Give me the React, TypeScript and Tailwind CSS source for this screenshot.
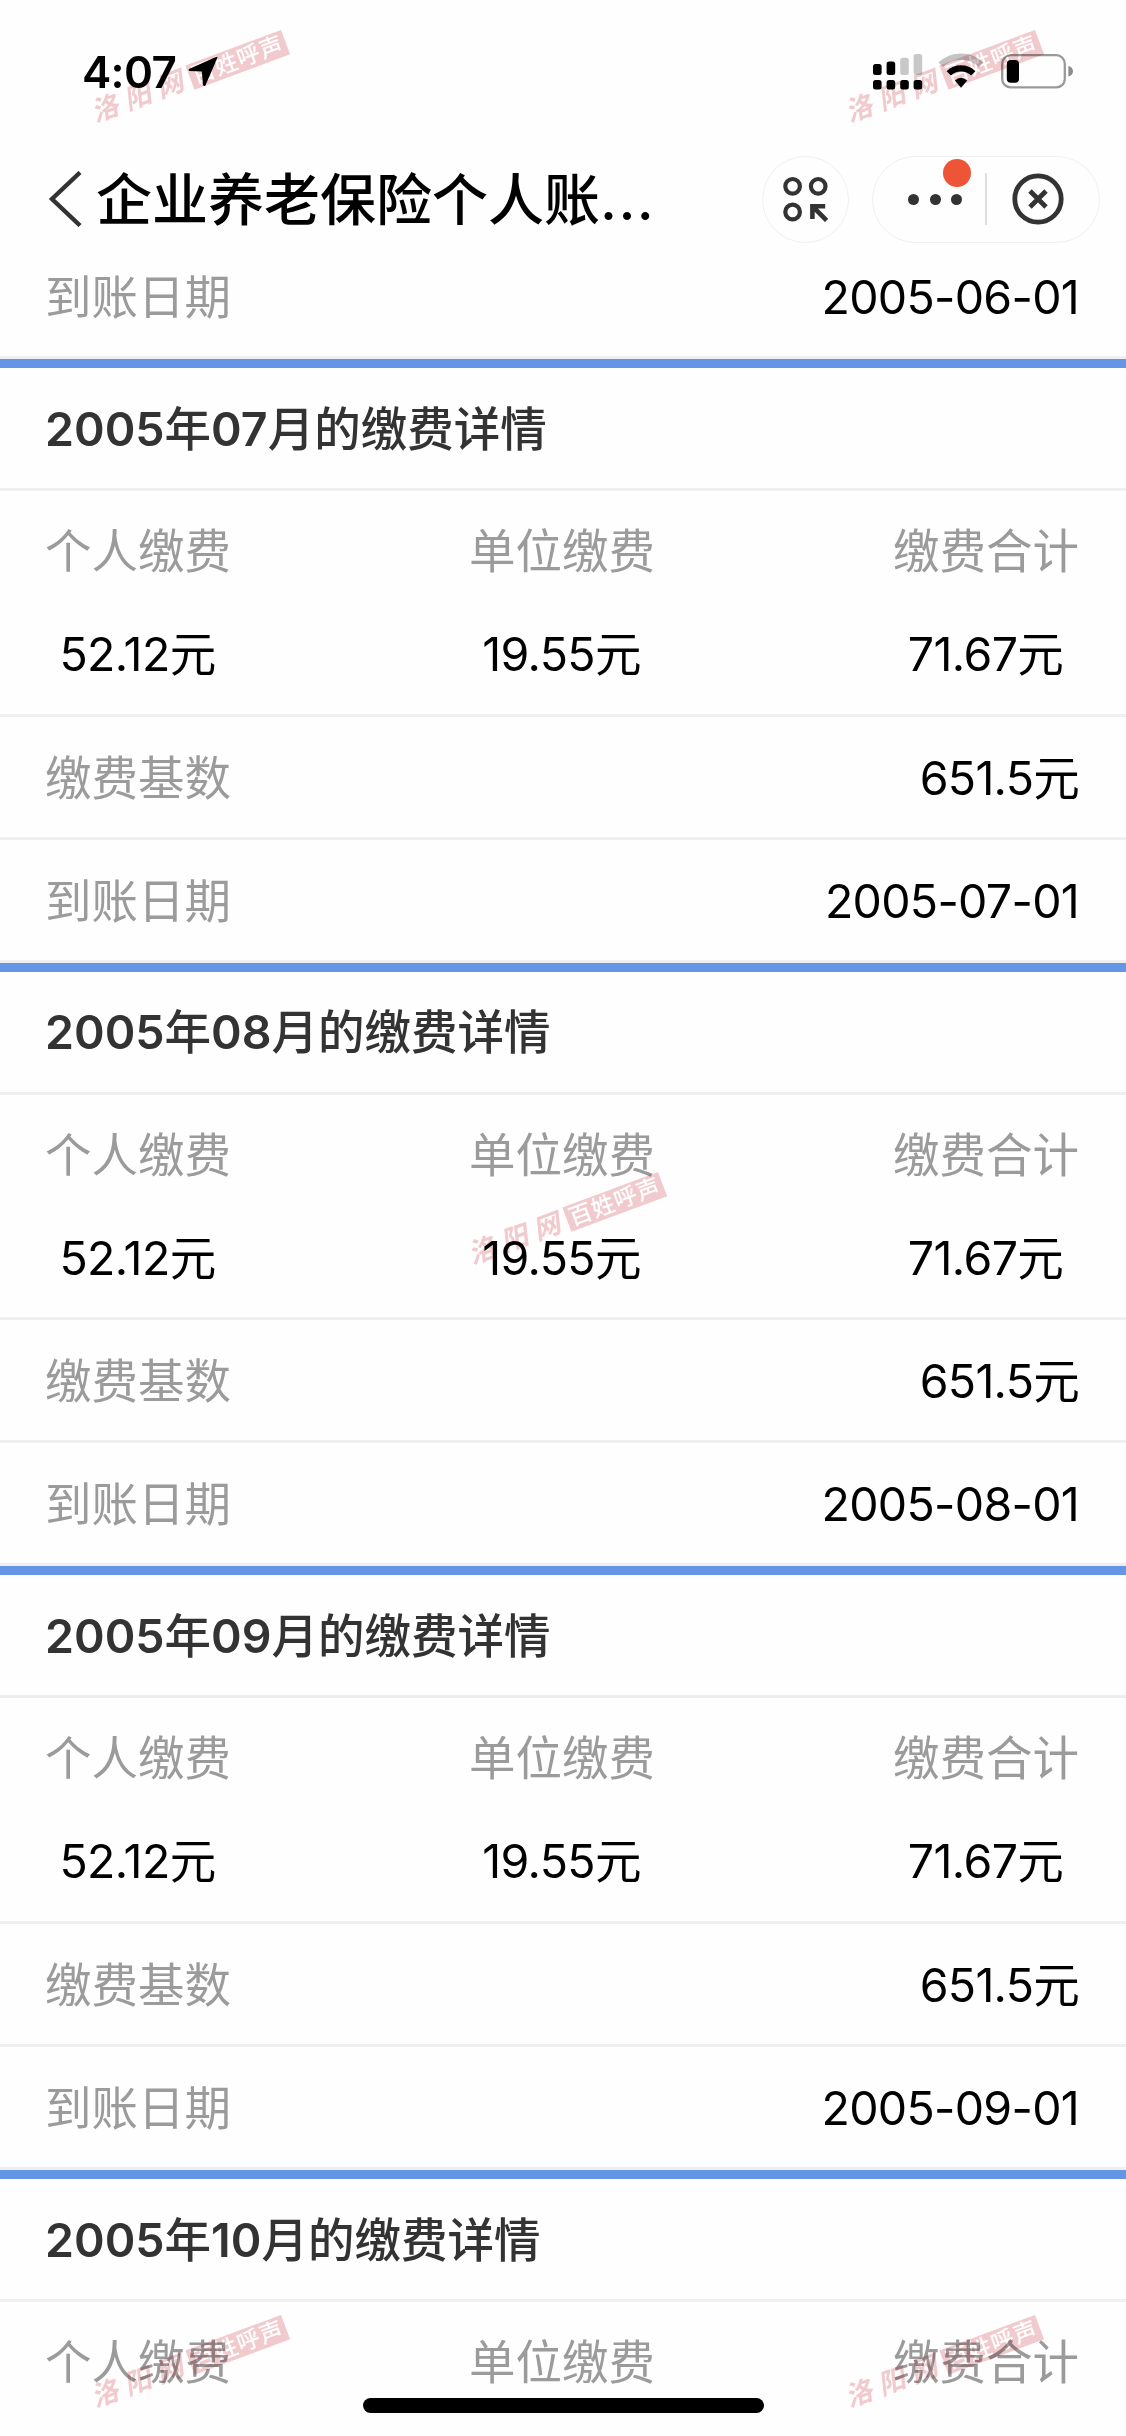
const records = [
  { month: "07", personal: "52.12元", company: "19.55元", total: "71.67元", base: "651.5元", date: "2005-07-01" },
  { month: "08", personal: "52.12元", company: "19.55元", total: "71.67元", base: "651.5元", date: "2005-08-01" },
  { month: "09", personal: "52.12元", company: "19.55元", total: "71.67元", base: "651.5元", date: "2005-09-01" },
];

function StatusBar() {
  return (
    <div className="flex h-[142px] items-start justify-between pl-[82px] pr-[52px]">
      <div className="flex items-start pt-[50px]">
        <span className="w-[106px] text-[44px] font-semibold leading-[44px] tracking-[-0.7px]">4:07</span>
        <svg className="mt-[6px]" width="30" height="31" viewBox="0 0 30 31">
          <path d="M28.6 0.8 L1 13 Q0 14.5 1.6 15 L13.8 15.6 L15 29 Q16 31 17.4 29.4 L29.4 1.8 Q29.6 0.6 28.6 0.8 Z" fill="#000" />
        </svg>
      </div>
      <svg className="mt-[53px]" width="202" height="37" viewBox="0 0 202 37">
        <g fill="#000">
          <rect x="1" y="11" width="8.6" height="11" rx="2.5" />
          <rect x="14.6" y="8.5" width="8.6" height="13.5" rx="2.5" />
          <rect x="1" y="27" width="8.6" height="9.5" rx="2.5" />
          <rect x="14.6" y="27" width="8.6" height="9.5" rx="2.5" />
          <rect x="28.2" y="27" width="8.6" height="9.5" rx="2.5" />
          <rect x="41.6" y="27" width="8.6" height="9.5" rx="2.5" />
        </g>
        <g fill="#c8c8c8">
          <rect x="28.2" y="4.7" width="8.6" height="17.3" rx="2.5" />
          <rect x="41.6" y="1" width="8.6" height="21" rx="2.5" />
        </g>
        <path d="M68.8 11.8 A29 29 0 0 1 109.2 11.8" fill="none" stroke="#c4c4c4" strokeWidth="6.4" />
        <path d="M76.8 20.4 A17.4 17.4 0 0 1 101.2 20.4" fill="none" stroke="#000" strokeWidth="6.2" />
        <path d="M82.8 27.6 Q89 22 95.2 27.6 L89 34.8 Z" fill="#000" />
        <rect x="130.2" y="2.2" width="62.6" height="32.2" rx="8.5" fill="none" stroke="#999" strokeWidth="2.3" />
        <rect x="134.8" y="7" width="12.2" height="22.8" rx="4" fill="#000" />
        <path d="M196.4 13 Q201 14.4 201 18.3 Q201 22.2 196.4 23.6 Z" fill="#8c8c8c" />
      </svg>
    </div>
  );
}

function NavBar() {
  return (
    <div className="flex h-[114px] items-center pl-[48px] pr-[26px]">
      <svg width="34" height="56" viewBox="0 0 34 56" className="shrink-0">
        <path d="M32 1.5 L4 28 L32 54.5" fill="none" stroke="#333" strokeWidth="4.4" />
      </svg>
      <h1 className="ml-[14px] whitespace-nowrap pt-[2px] text-[56px] font-medium leading-[60px]">
        企业养老保险个人账<span className="tracking-[1.4px]">...</span>
      </h1>
      <div className="ml-auto flex shrink-0 items-center gap-[23px]">
        <div className="flex size-[87px] items-center justify-center rounded-full border-[1.5px] border-[#f0f0f0]">
          <svg width="46" height="46" viewBox="0 0 46 46">
            <g fill="none" stroke="#333" strokeWidth="4.2">
              <circle cx="9.6" cy="10.3" r="7.3" />
              <circle cx="35.2" cy="10.3" r="7.3" />
              <circle cx="9.6" cy="36" r="7.3" />
              <path d="M29.4 43 V30.2 H42.2 M29.8 30.6 L43.6 44.4" strokeWidth="4.6" />
            </g>
          </svg>
        </div>
        <div className="relative flex h-[87px] w-[228px] items-center rounded-full border-[1.5px] border-[#f0f0f0]">
          <div className="flex w-[112px] items-center justify-center gap-[10.5px] pl-[12px]">
            <i className="size-[11px] rounded-full bg-[#333]" />
            <i className="size-[11px] rounded-full bg-[#333]" />
            <i className="size-[11px] rounded-full bg-[#333]" />
          </div>
          <div className="h-[52px] w-[2px] bg-[#dedede]" />
          <svg className="ml-[25px]" width="52" height="52" viewBox="0 0 52 52">
            <g fill="none" stroke="#333" strokeWidth="4.8">
              <circle cx="26" cy="26" r="23.2" />
              <path d="M18 18 L34 34 M34 18 L18 34" />
            </g>
          </svg>
          <span className="absolute left-[70px] top-[2px] size-[28px] rounded-full bg-[#ee5436]" />
        </div>
      </div>
    </div>
  );
}

function Row({ label, value }: { label: string; value: string }) {
  return (
    <div className="flex h-[123px] items-center justify-between border-b-[3px] border-[#efefef] pl-[45px] pr-[47px] pt-[2px]">
      <span className="text-[#9b9b9b]">{label}</span>
      <span className="tracking-[-0.7px]">{value}</span>
    </div>
  );
}

function Heading({ month }: { month: string }) {
  return (
    <div className="flex h-[132px] items-center border-b-[3px] border-t-[9px] border-b-[#efefef] border-t-[#6495e6] px-[45px] pt-[1px] font-medium text-[#333]">
      <h2>
        <span className="font-semibold">2005</span>年
        <span className="font-semibold">{month}</span>月的缴费详情
      </h2>
    </div>
  );
}

function Amount({ label, value }: { label: string; value?: string }) {
  return (
    <div className="flex flex-col items-center gap-[43px]">
      <span className="text-[#9b9b9b]">{label}</span>
      <span className="pr-[1px] tracking-[-0.6px]">{value}</span>
    </div>
  );
}

function Amounts({ personal, company, total }: { personal?: string; company?: string; total?: string }) {
  return (
    <div className="flex h-[225.7px] justify-between border-b-[3px] border-[#efefef] pl-[45px] pr-[47px] pt-[30px]">
      <Amount label="个人缴费" value={personal} />
      <Amount label="单位缴费" value={company} />
      <Amount label="缴费合计" value={total} />
    </div>
  );
}

function Watermark({ className }: { className: string }) {
  return (
    <div className={`absolute flex h-[26px] w-[206px] rotate-[-20.4deg] items-center justify-between mix-blend-multiply ${className}`}>
      <span className="whitespace-nowrap text-[27px] font-bold italic leading-[26px] tracking-[7.5px] text-[#f2cbce]">洛阳网</span>
      <span className="flex h-[26px] w-[102px] shrink-0 items-center justify-center bg-[#f2cbce] text-[23px] font-medium leading-[26px] tracking-[1px] text-white">
        百姓呼声
      </span>
    </div>
  );
}

export default function App() {
  return (
    <div
      lang="zh-CN"
      className="relative h-[2436px] w-[1126px] overflow-hidden bg-[#fefefe] font-['Inter','Noto_Sans_CJK_SC',sans-serif] text-[46.5px] leading-[60px] text-black"
    >
      <StatusBar />
      <NavBar />

      {/* list is scrolled, so the first row tucks under the nav bar */}
      <main className="-mt-[20px]">
        <Row label="到账日期" value="2005-06-01" />
        {records.map((r) => (
          <section key={r.month}>
            <Heading month={r.month} />
            <Amounts personal={r.personal} company={r.company} total={r.total} />
            <Row label="缴费基数" value={r.base} />
            <Row label="到账日期" value={r.date} />
          </section>
        ))}
        <Heading month="10" />
        <Amounts />
      </main>

      <Watermark className="left-[86px] top-[65px]" />
      <Watermark className="left-[840px] top-[65px]" />
      <Watermark className="left-[463px] top-[1207px]" />
      <Watermark className="left-[86px] top-[2350px]" />
      <Watermark className="left-[840px] top-[2350px]" />

      <div className="absolute bottom-[23px] left-[363px] h-[15px] w-[401px] rounded-full bg-black" />
    </div>
  );
}
